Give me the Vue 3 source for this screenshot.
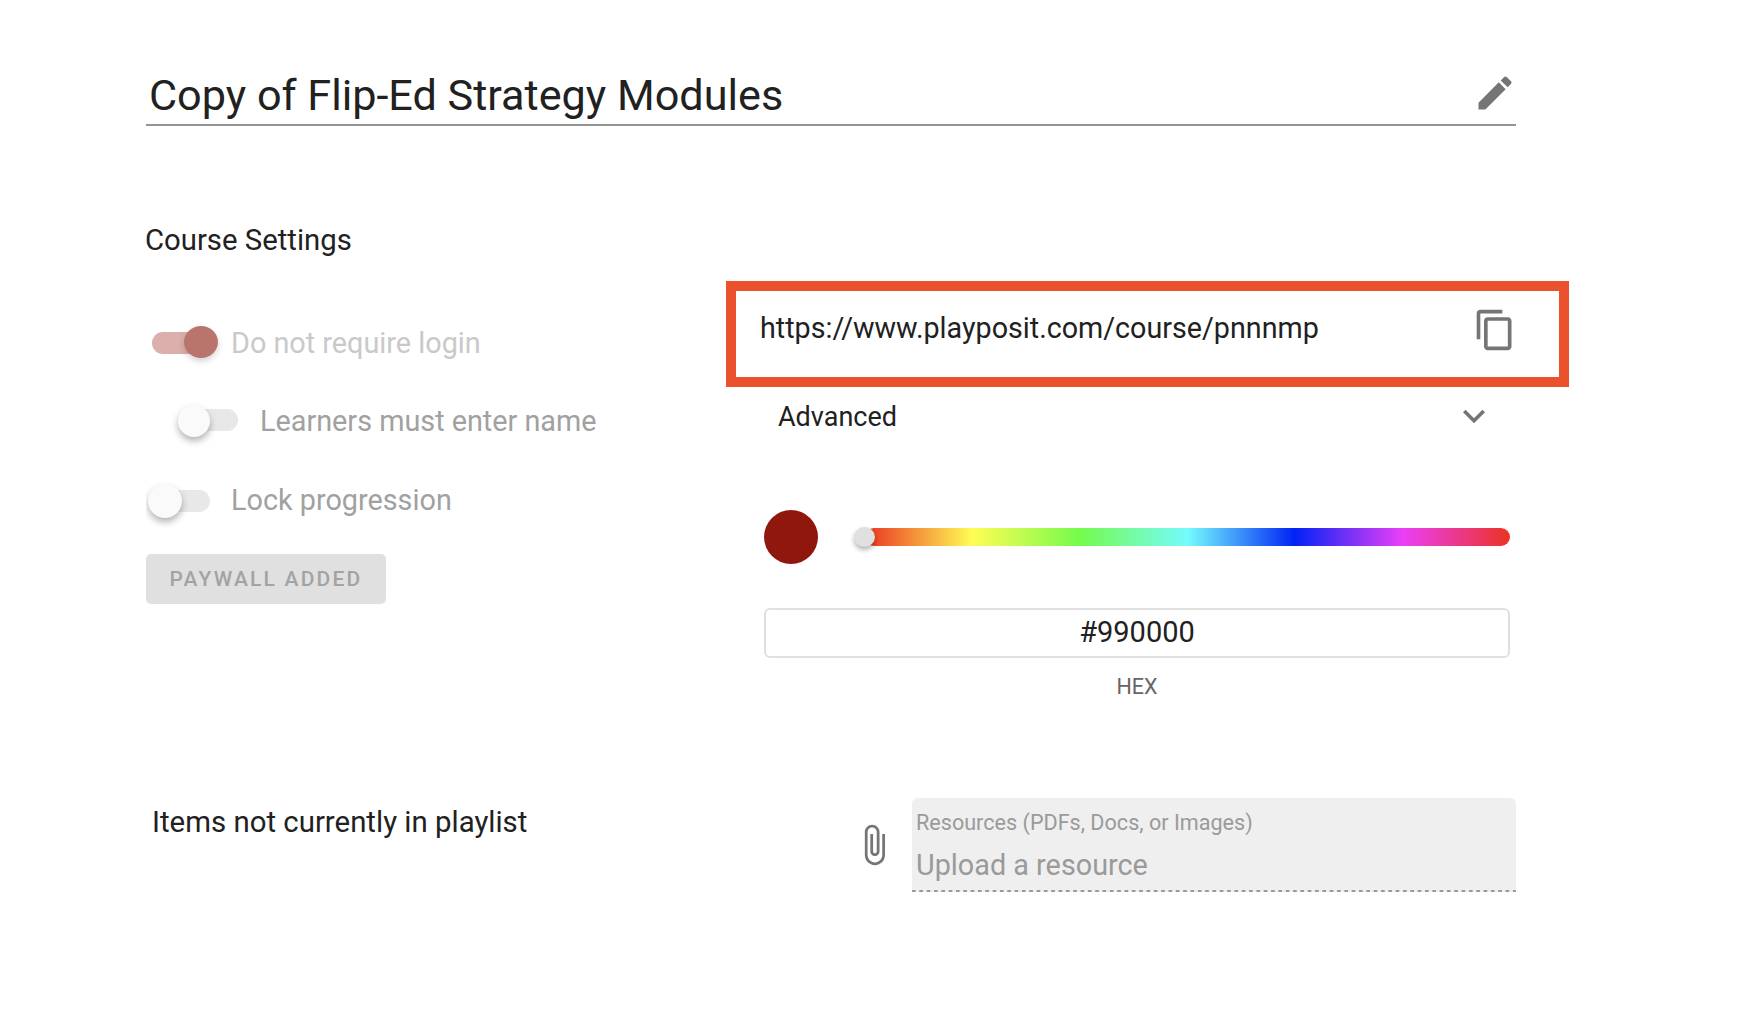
<template>
  <div class="page">
    <div class="title-row">
      <span class="title">Copy of Flip-Ed Strategy Modules</span>
      <svg class="icon" viewBox="0 0 24 24"><path d="M3 17.25V21h3.75L17.81 9.94l-3.75-3.75L3 17.25zM20.71 7.04c.39-.39.39-1.02 0-1.41l-2.34-2.34c-.39-.39-1.02-.39-1.41 0l-1.83 1.83 3.75 3.75 1.83-1.83z" /></svg>
    </div>

    <h2 class="settings-title">Course Settings</h2>

    <div class="columns">
      <div class="left-col">
        <div
          v-for="item in toggles"
          :key="item.label"
          class="toggle-row"
          :class="{ indented: item.indented, 'is-on': item.on }"
        >
          <span class="track"><span class="thumb"></span></span>
          <span class="toggle-label">{{ item.label }}</span>
        </div>
        <button type="button" class="paywall-btn" disabled>PAYWALL ADDED</button>
      </div>

      <div class="right-col">
        <div class="url-box">
          <span class="url-text">https://www.playposit.com/course/pnnnmp</span>
          <svg class="icon" viewBox="0 0 24 24"><path d="M16 1H4c-1.1 0-2 .9-2 2v14h2V3h12V1zm3 4H8c-1.1 0-2 .9-2 2v14c0 1.1.9 2 2 2h11c1.1 0 2-.9 2-2V7c0-1.1-.9-2-2-2zm0 16H8V7h11v14z" /></svg>
        </div>

        <div class="advanced-row">
          <span class="advanced-text">Advanced</span>
          <svg class="icon" viewBox="0 0 24 24"><path d="M16.59 8.59L12 13.17 7.41 8.59 6 10l6 6 6-6z" /></svg>
        </div>

        <div class="slider-row">
          <span class="swatch"></span>
          <div class="hue-track"><span class="hue-thumb"></span></div>
        </div>

        <div class="hex-box">#990000</div>
        <div class="hex-label">HEX</div>
      </div>
    </div>

    <div class="bottom-row">
      <span class="items-text">Items not currently in playlist</span>
      <div class="upload">
        <svg class="icon clip" viewBox="0 0 24 24"><path d="M16.5 6v11.5c0 2.21-1.79 4-4 4s-4-1.79-4-4V5c0-1.38 1.12-2.5 2.5-2.5s2.5 1.12 2.5 2.5v10.5c0 .55-.45 1-1 1s-1-.45-1-1V6H10v9.5c0 1.38 1.12 2.5 2.5 2.5s2.5-1.12 2.5-2.5V5c0-2.21-1.79-4-4-4S7 2.79 7 5v12.5c0 3.04 2.46 5.5 5.5 5.5s5.5-2.46 5.5-5.5V6h-1.5z" /></svg>
        <div class="upload-field">
          <span class="upload-label">Resources (PDFs, Docs, or Images)</span>
          <span class="upload-value">Upload a resource</span>
        </div>
      </div>
    </div>
  </div>
</template>

<script setup>
const toggles = [
  { label: 'Do not require login', on: true, indented: false },
  { label: 'Learners must enter name', on: false, indented: true },
  { label: 'Lock progression', on: false, indented: false }
]
</script>

<style>
html,
body {
  background: #fff;
}
</style>

<style scoped>
.page {
  width: 1423px;
  height: 1030px;
  margin-left: 146px;
  padding-top: 70px;
  box-sizing: border-box;
  font-family: Roboto, "Liberation Sans", sans-serif;
  color: #212121;
  overflow: hidden;
}

.icon {
  width: 44px;
  height: 44px;
  flex: none;
  fill: #757575;
}

.title-row {
  width: 1370px;
  height: 56px;
  box-sizing: border-box;
  padding: 0 0 0 3px;
  display: flex;
  justify-content: space-between;
  align-items: center;
  border-bottom: 2px solid #949494;
}

.title {
  font-size: 43.2px;
  line-height: 50px;
  margin-top: -3px;
}

.title-row .icon {
  margin: -8px -1px 0 0;
}

.settings-title {
  margin: 94px 0 0 -1px;
  font-size: 29.3px;
  font-weight: 400;
  line-height: 40px;
}

.columns {
  display: grid;
  grid-template-columns: 580px 843px;
  margin-top: 21px;
}

.left-col {
  padding-top: 42px;
}

.toggle-row {
  display: flex;
  align-items: center;
  height: 40px;
  padding-left: 6px;
  margin-bottom: 39px;
}

.toggle-row:first-child {
  margin-bottom: 38px;
}

.toggle-row.indented {
  padding-left: 36px;
}

.track {
  position: relative;
  display: block;
  width: 58px;
  height: 22px;
  border-radius: 11px;
  background: #e8e8e8;
}

.indented .track {
  width: 56px;
  margin-top: -2px;
}

.toggle-row:nth-child(3) .track {
  margin-top: 2px;
}

.thumb {
  position: absolute;
  left: -4px;
  top: -6px;
  width: 34px;
  height: 34px;
  border-radius: 50%;
  background: #fafafa;
  box-shadow: 0 4px 7px rgba(0, 0, 0, 0.3);
}

.indented .thumb {
  top: -4px;
  width: 32px;
  height: 32px;
}

.is-on .track {
  background: #dbb0ac;
}

.is-on .thumb {
  left: 32px;
  height: 32px;
  background: #b9746c;
  box-shadow: 0 3px 6px rgba(0, 0, 0, 0.18);
}

.toggle-label {
  margin-left: 21px;
  font-size: 28.8px;
  color: #a1a1a1;
}

.indented .toggle-label {
  margin-left: 22px;
}

.is-on .toggle-label {
  color: #c9c9c9;
}

.paywall-btn {
  display: block;
  width: 240px;
  height: 50px;
  margin-top: -5px;
  padding: 0;
  border: none;
  border-radius: 5px;
  background: #e0e0e0;
  color: #a3a3a3;
  font-family: inherit;
  font-size: 21px;
  font-weight: 500;
  letter-spacing: 2.2px;
}

.url-box {
  height: 106px;
  box-sizing: border-box;
  border: 10px solid #ec512d;
  padding: 17px 42px 0 24px;
  display: flex;
  justify-content: space-between;
  align-items: flex-start;
}

.url-text {
  font-size: 28.7px;
  line-height: 41px;
}

.advanced-row {
  height: 60px;
  padding: 0 73px 0 52px;
  display: flex;
  justify-content: space-between;
  align-items: center;
}

.advanced-row .icon {
  margin-top: -2px;
}

.advanced-text {
  font-size: 27px;
}

.slider-row {
  margin: 63px 59px 0 38px;
  display: flex;
  align-items: center;
  gap: 47px;
}

.swatch {
  width: 54px;
  height: 54px;
  flex: none;
  border-radius: 50%;
  background: #8f170e;
}

.hue-track {
  position: relative;
  flex: 1;
  height: 18px;
  border-radius: 9px;
  background: linear-gradient(to right, #eb3323 0%, #fffd54 16.6%, #75fb4c 33.3%, #75fbfd 50%, #0023f5 66.6%, #ea3ff7 83.3%, #eb3323 100%);
}

.hue-thumb {
  position: absolute;
  left: -11px;
  top: -1px;
  width: 21px;
  height: 20px;
  border-radius: 50%;
  background: #e0e0e0;
  box-shadow: 0 3px 5px rgba(0, 0, 0, 0.3);
}

.hex-box {
  height: 50px;
  margin: 44px 59px 0 38px;
  box-sizing: border-box;
  border: 2px solid #e0e0e0;
  border-radius: 6px;
  font-size: 29px;
  line-height: 45px;
  text-align: center;
}

.hex-label {
  margin: 17px 59px 0 38px;
  font-size: 21.5px;
  line-height: 24px;
  text-align: center;
  color: #666;
}

.bottom-row {
  width: 1370px;
  margin-top: 99px;
  display: flex;
  justify-content: space-between;
  align-items: flex-start;
}

.items-text {
  padding: 4px 0 0 6px;
  font-size: 29.4px;
  line-height: 40px;
}

.upload {
  display: flex;
  align-items: center;
  gap: 16px;
}

.upload-field {
  width: 604px;
  height: 94px;
  box-sizing: border-box;
  padding: 12px 4px 0;
  border-radius: 6px 6px 0 0;
  background: linear-gradient(to right, #999 45%, transparent 45%) left bottom / 7.33px 2px repeat-x, #efefef;
  display: flex;
  flex-direction: column;
}

.upload-label {
  font-size: 21.6px;
  line-height: 26px;
  color: #9a9a9a;
}

.upload-value {
  margin-top: 12px;
  font-size: 28.8px;
  line-height: 34px;
  color: #9a9a9a;
}
</style>
